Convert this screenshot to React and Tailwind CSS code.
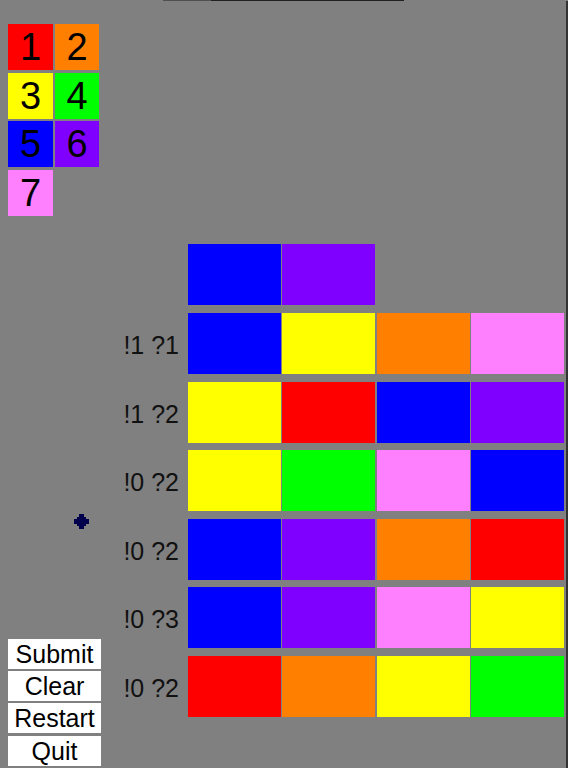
const COLORS = {
  red: 'bg-[#ff0000]',
  orange: 'bg-[#ff8000]',
  yellow: 'bg-[#ffff00]',
  green: 'bg-[#00ff00]',
  blue: 'bg-[#0000ff]',
  purple: 'bg-[#8000ff]',
  pink: 'bg-[#ff80ff]',
}

const PALETTE = [
  [{ n: 1, c: 'red' }, { n: 2, c: 'orange' }],
  [{ n: 3, c: 'yellow' }, { n: 4, c: 'green' }],
  [{ n: 5, c: 'blue' }, { n: 6, c: 'purple' }],
  [{ n: 7, c: 'pink' }],
]
const PALETTE_GAPS = ['mt-0', 'mt-[3px]', 'mt-[2px]', 'mt-[3px]']

// guesses, oldest first; first row is the one being built
const ROWS = [
  { label: '', pegs: ['blue', 'purple'], gap: 'mt-0' },
  { label: '!1 ?1', pegs: ['blue', 'yellow', 'orange', 'pink'], gap: 'mt-[8px]' },
  { label: '!1 ?2', pegs: ['yellow', 'red', 'blue', 'purple'], gap: 'mt-[8px]' },
  { label: '!0 ?2', pegs: ['yellow', 'green', 'pink', 'blue'], gap: 'mt-[7px]' },
  { label: '!0 ?2', pegs: ['blue', 'purple', 'orange', 'red'], gap: 'mt-[8px]' },
  { label: '!0 ?3', pegs: ['blue', 'purple', 'pink', 'yellow'], gap: 'mt-[7px]' },
  { label: '!0 ?2', pegs: ['red', 'orange', 'yellow', 'green'], gap: 'mt-[8px]' },
]
const CELL_GAPS = ['ml-0', 'ml-[1px]', 'ml-[2px]', 'ml-[1px]']

const BUTTONS = [
  { text: 'Submit', gap: 'mt-0' },
  { text: 'Clear', gap: 'mt-[2px]' },
  { text: 'Restart', gap: 'mt-[2px]' },
  { text: 'Quit', gap: 'mt-[3px]' },
]

export default function App() {
  return (
    <div
      className="relative w-[568px] h-[768px] overflow-hidden bg-[#808080] flex flex-col text-black"
      style={{ fontFamily: '"Liberation Sans", Arial, sans-serif' }}
    >
      <div className="flex h-px shrink-0">
        <div className="ml-[163px] w-[48px] bg-[#505050]" />
        <div className="w-[193px] bg-[#202020]" />
      </div>

      <div className="flex flex-1 min-h-0">
        <div className="w-[110px] shrink-0 flex flex-col pl-[8px] pt-[23px] pb-[2px]">
          <div className="flex flex-col">
            {PALETTE.map((row, i) => (
              <div key={i} className={`flex gap-[2px] ${PALETTE_GAPS[i]}`}>
                {row.map((p, j) => (
                  <div
                    key={p.n}
                    className={`${j === 0 ? 'w-[45px]' : 'w-[44px]'} h-[46px] ${COLORS[p.c]} flex items-center justify-center text-[38px] leading-none`}
                  >
                    {p.n}
                  </div>
                ))}
              </div>
            ))}
          </div>

          <div className="mt-auto flex flex-col">
            {BUTTONS.map(b => (
              <button
                key={b.text}
                className={`${b.gap} w-[93px] h-[30px] bg-white flex items-center justify-center text-[25px] leading-none`}
              >
                {b.text}
              </button>
            ))}
          </div>
        </div>

        <div className="flex flex-col pt-[243px]">
          {ROWS.map((row, i) => (
            <div key={i} className={`flex items-center h-[61px] ${row.gap}`}>
              <div className="w-[78px] pr-[9px] pt-[3px] text-right text-[25px] leading-none text-[#111]">
                {row.label}
              </div>
              {row.pegs.map((c, j) => (
                <div key={j} className={`w-[93px] h-[61px] ${COLORS[c]} ${CELL_GAPS[j]}`} />
              ))}
            </div>
          ))}
        </div>

        <div className="ml-auto w-[2px] bg-[#333333]" />
      </div>

      <svg
        className="absolute left-[74px] top-[514px]"
        width="15"
        height="15"
        viewBox="0 0 15 15"
      >
        <polygon
          fill="#00004d"
          points="5,0 10,0 10,3 12,3 12,5 15,5 15,10 12,10 12,12 10,12 10,15 5,15 5,12 3,12 3,10 0,10 0,5 3,5 3,3 5,3"
        />
      </svg>
    </div>
  )
}
